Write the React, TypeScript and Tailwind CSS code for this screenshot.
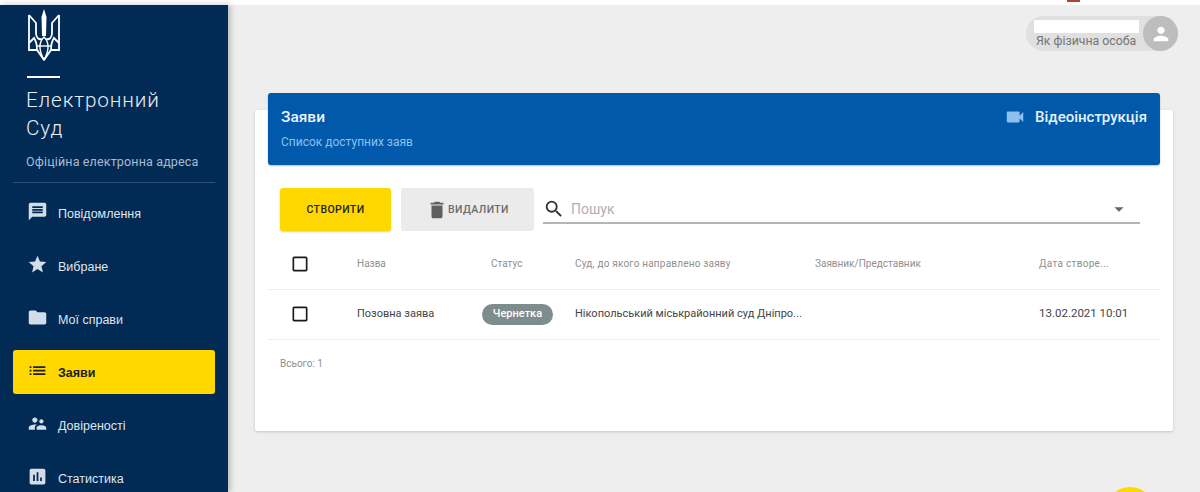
import React from "react";
import {
  MdArrowDropDown,
  MdAssessment,
  MdCheckBoxOutlineBlank,
  MdDelete,
  MdFolder,
  MdList,
  MdMessage,
  MdPerson,
  MdSearch,
  MdStar,
  MdSupervisorAccount,
  MdVideocam,
} from "react-icons/md";

const navItems = [
  { label: "Повідомлення", icon: MdMessage },
  { label: "Вибране", icon: MdStar },
  { label: "Мої справи", icon: MdFolder },
  { label: "Заяви", icon: MdList, active: true },
  { label: "Довіреності", icon: MdSupervisorAccount },
  { label: "Статистика", icon: MdAssessment },
];

const rowGrid = "grid grid-cols-[89px_134px_84px_240px_224px_121px] items-center";

function Trident() {
  return (
    <svg width="32" height="52" viewBox="0 0 32 52" fill="none" stroke="#ffffff" strokeWidth="1.8">
      <path d="M16 0 L18.5 8 L18 27 L14 27 L13.5 8 Z" fill="#ffffff" stroke="none" />
      <path d="M1 6 V41 H9 L16 51" />
      <path d="M31 6 V41 H23 L16 51" />
      <path d="M1 6 L8 14 V24 C8 29 11 31 14 30" />
      <path d="M31 6 L24 14 V24 C24 29 21 31 18 30" />
      <path d="M1 34 L6 29 C8 32 9 34 9 41" />
      <path d="M31 34 L26 29 C24 32 23 34 23 41" />
      <path d="M16 28 C11 33 10 40 16 51 C22 40 21 33 16 28 Z" strokeWidth="1.4" />
      <path d="M9 37 H23" strokeWidth="1.4" />
    </svg>
  );
}

function Sidebar() {
  return (
    <aside className="w-[228px] shrink-0 bg-[#012a55] shadow-[2px_0_6px_rgba(0,0,0,0.25)] z-10 overflow-hidden">
      <div className="pl-[26px] pt-[4px]">
        <div className="ml-[2px]">
          <Trident />
        </div>
        <div className="w-[33px] h-[2px] bg-white mt-[15px] ml-[1px]" />
        <div className="mt-[8px] text-[20.7px] leading-[28px] font-light tracking-[0.85px] text-[#e8edf3] font-['Roboto',sans-serif]">
          Електронний
          <br />
          Суд
        </div>
        <div className="mt-[11px] text-[12.5px] leading-[18px] tracking-[0.15px] text-[#a8bbd0] font-['Roboto',sans-serif]">
          Офіційна електронна адреса
        </div>
      </div>
      <div className="mx-[13px] mt-[11px] h-px bg-[#2f5177]" />
      <nav className="mt-[8px] mx-[13px] flex flex-col gap-[9px]">
        {navItems.map((item) => (
          <div
            key={item.label}
            className={`h-[44px] flex items-center pl-[14px] gap-[10px] rounded-[3px] text-[12.5px] font-['Liberation_Sans',sans-serif] ${
              item.active ? "bg-[#ffd800] text-[#1d1d1d] font-bold" : "text-[#dfe6ee]"
            }`}
          >
            <item.icon size={21} className={`mb-[3px] ${item.active ? "text-[#1d1d1d]" : "text-[#d3dde9]"}`} />
            <span className="pt-[2px]">{item.label}</span>
          </div>
        ))}
      </nav>
    </aside>
  );
}

function UserBadge() {
  return (
    <div className="flex justify-end mr-[-5px]">
      <div className="w-[152px] h-[35px] rounded-full bg-[#e0e0e0] flex items-center justify-between">
        <div className="pl-[10px] pt-[2px] flex flex-col">
          <div className="w-[105px] h-[13px] bg-white -ml-[2px] mb-[1px]" />
          <div className="text-[12.3px] leading-[15px] text-[#757575] font-['Roboto',sans-serif] whitespace-nowrap">
            Як фізична особа
          </div>
        </div>
        <div className="w-[35px] h-[35px] rounded-full bg-[#bdbdbd] flex items-center justify-center shrink-0">
          <MdPerson size={22} className="text-white" />
        </div>
      </div>
    </div>
  );
}

function Toolbar() {
  return (
    <div className="flex items-start mt-[23px] pl-[25px] pr-[33px]">
      <button className="w-[111px] h-[43px] rounded-[3px] bg-[#ffd800] text-[10.5px] font-medium tracking-[0.4px] text-[#222222] shadow-[0_1px_2px_rgba(0,0,0,0.2)]">
        СТВОРИТИ
      </button>
      <button className="ml-[10px] w-[133px] h-[43px] rounded-[3px] bg-[#ebebeb] flex items-center justify-center text-[10.5px] font-medium tracking-[0.4px] text-[#6b6b6b]">
        <MdDelete size={22} className="text-[#5f5f5f]" />
        <span>ВИДАЛИТИ</span>
      </button>
      <div className="ml-[9px] flex-1 h-[36px] pt-[7px] border-b-2 border-[#b5b5b5] flex items-center">
        <MdSearch size={22} className="text-[#333333]" />
        <span className="ml-[6px] pt-[2px] flex-1 text-[14px] text-[#b0b0b0]">Пошук</span>
        <MdArrowDropDown size={22} className="text-[#666666] mr-[10px]" />
      </div>
    </div>
  );
}

function RequestsTable() {
  return (
    <div className="mt-[8px] mx-[13px] text-[10px] text-[#8f8f8f]">
      <div className={`${rowGrid} h-[51px] pb-[1px] border-b border-[#ececec]`}>
        <MdCheckBoxOutlineBlank size={20} className="ml-[22px] text-[#1a1a1a]" />
        <span>Назва</span>
        <span>Статус</span>
        <span className="tracking-[0.2px]">Суд, до якого направлено заяву</span>
        <span>Заявник/Представник</span>
        <span className="tracking-[0.3px]">Дата створе...</span>
      </div>
      <div className={`${rowGrid} h-[50px] pb-[1px] border-b border-[#ececec] text-[#444444] text-[11px]`}>
        <MdCheckBoxOutlineBlank size={20} className="ml-[22px] text-[#1a1a1a]" />
        <span>Позовна заява</span>
        <span className="-ml-[9px] w-[71px] h-[21px] rounded-full bg-[#7f8c8d] text-white font-medium flex items-center justify-center">
          Чернетка
        </span>
        <span className="truncate whitespace-nowrap">Нікопольський міськрайонний суд Дніпро...</span>
        <span />
        <span className="whitespace-nowrap text-[11.5px]">13.02.2021 10:01</span>
      </div>
    </div>
  );
}

export default function App() {
  return (
    <div className="w-[1200px] h-[492px] flex flex-col overflow-hidden bg-[#eeeeee] font-['Roboto',sans-serif]">
      <div className="h-[5px] bg-white shrink-0 flex justify-end pr-[120px]">
        <div className="w-[13px] h-[2px] bg-[#b5403a]" />
      </div>
      <div className="flex flex-1 min-h-0">
        <Sidebar />
        <main className="relative flex-1 pl-[27px] pr-[27px] pt-[11px]">
          <UserBadge />
          <div className="mt-[59px] h-[321px] bg-white rounded-[2px] shadow-[0_1px_3px_rgba(0,0,0,0.18)]">
            <div className="relative -top-[17px] mb-[-17px] mx-[13px] h-[72px] rounded-[3px] bg-[#0059ab] shadow-[0_1px_2px_rgba(0,0,0,0.25)] flex justify-between pl-[13px] pr-[13px] pt-[14px]">
              <div>
                <div className="text-[15.5px] leading-[20px] font-medium text-[#eef5fb]">Заяви</div>
                <div className="mt-[7px] text-[12px] leading-[16px] text-[#8ec0ee]">Список доступних заяв</div>
              </div>
              <div className="flex items-start">
                <MdVideocam size={22} className="text-[#8ec0ee] -mt-px" />
                <span className="ml-[9px] text-[15px] leading-[20px] font-medium text-[#e3f1fc]">Відеоінструкція</span>
              </div>
            </div>
            <Toolbar />
            <RequestsTable />
            <div className="mt-[17px] ml-[25px] text-[10px] leading-[14px] text-[#8f8f8f]">Всього: 1</div>
          </div>
          <div className="absolute left-[878px] top-[482px] w-[48px] h-[48px] rounded-full bg-[#ffd800]" />
        </main>
      </div>
    </div>
  );
}
